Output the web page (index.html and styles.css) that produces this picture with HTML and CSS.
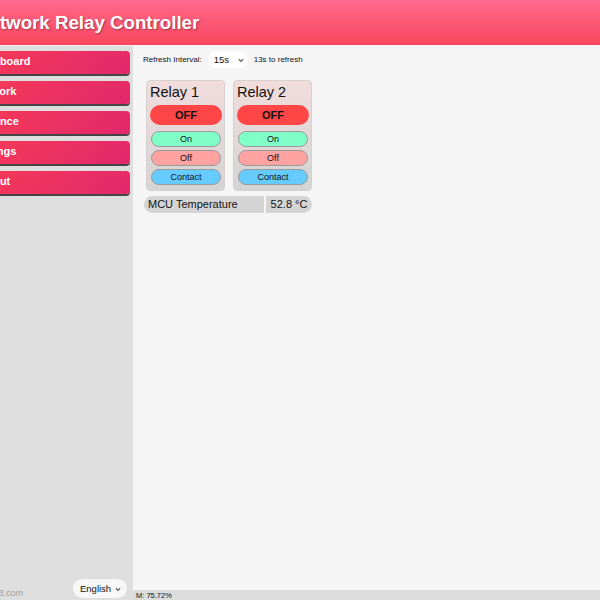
FILE: index.html
```html
<!DOCTYPE html>
<html lang="en">
<head>
    <meta charset="UTF-8">
    <meta name="viewport" content="width=device-width, initial-scale=1.0">
    <title>Network Relay Controller</title>
    <link rel="stylesheet" href="styles.css">
</head>
<body>
    <!-- Top bar -->
    <header class="topbar">
        <h1 class="title">Network Relay Controller</h1>
    </header>

    <div class="layout">
        <!-- Side menu -->
        <nav class="sidebar">
            <div class="menu">
                <a class="menu-btn">Dashboard</a>
                <a class="menu-btn">Network</a>
                <a class="menu-btn">Advance</a>
                <a class="menu-btn">Settings</a>
                <a class="menu-btn">Logout</a>
            </div>
            <div class="side-footer">
                <span class="site">nrc3.com</span>
                <div class="pill-select lang">English <svg width="6" height="5" viewBox="0 0 6 5"><path d="M0.8 1.2 L3 3.4 L5.2 1.2" fill="none" stroke="#555" stroke-width="1.1"/></svg></div>
            </div>
        </nav>

        <!-- Main content -->
        <main class="content">
            <div class="refresh-row">
                <span>Refresh Interval:</span>
                <div class="pill-select interval">15s <svg width="6" height="5" viewBox="0 0 6 5"><path d="M0.8 1.2 L3 3.4 L5.2 1.2" fill="none" stroke="#555" stroke-width="1.1"/></svg></div>
                <span>13s to refresh</span>
            </div>

            <div class="relays">
                <div class="relay-card">
                    <div class="relay-name">Relay 1</div>
                    <div class="state off">OFF</div>
                    <button class="act on">On</button>
                    <button class="act off">Off</button>
                    <button class="act contact">Contact</button>
                </div>
                <div class="relay-card">
                    <div class="relay-name">Relay 2</div>
                    <div class="state off">OFF</div>
                    <button class="act on">On</button>
                    <button class="act off">Off</button>
                    <button class="act contact">Contact</button>
                </div>
            </div>

            <div class="sensor">
                <div class="sensor-label">MCU Temperature</div>
                <div class="sensor-value">52.8 °C</div>
            </div>

            <div class="status">M: 75.72%</div>
        </main>
    </div>
</body>
</html>
```

FILE: styles.css
```css
/* Relay controller page */
body {
    margin: 0;
    height: 600px;
    overflow: hidden;
    display: flex;
    flex-direction: column;
    font-family: "Liberation Sans", Arial, sans-serif;
    background-color: #f5f5f5;
}

.topbar {
    height: 45px;
    flex-shrink: 0;
    background: linear-gradient(to bottom, #ff6a8e, #f9455d);
    border-bottom: 1px solid #f2f2f2;
    display: flex;
    align-items: center;
}

.title {
    margin: 0 0 0 -24px;
    font-size: 18.7px;
    font-weight: bold;
    color: white;
    text-shadow: 1px 1px 2px rgba(0, 0, 0, 0.35);
    white-space: nowrap;
}

.layout {
    flex: 1;
    display: flex;
    min-height: 0;
}

.sidebar {
    width: 133px;
    flex-shrink: 0;
    background-color: #dedede;
    display: flex;
    flex-direction: column;
    justify-content: space-between;
    overflow: hidden;
}

.menu {
    display: flex;
    flex-direction: column;
    gap: 7px;
    padding-top: 5px;
    margin-left: -40px;
    margin-right: 3px;
}

.menu-btn {
    height: 23px;
    line-height: 21px;
    padding-left: 13px;
    font-size: 11px;
    font-weight: bold;
    color: white;
    background: linear-gradient(135deg, #f83c55, #e2286c);
    border-radius: 4px;
    box-shadow: 0 2px 0 #454545;
}

.side-footer {
    display: flex;
    align-items: center;
    justify-content: space-between;
    padding: 0 6px 2px 0;
}

.site {
    margin-left: -14px;
    margin-top: 9px;
    font-size: 9px;
    font-style: italic;
    color: #a0a0a0;
}

.pill-select {
    display: flex;
    align-items: center;
    justify-content: space-between;
    background-color: #f7f7f7;
    border-radius: 10px;
    color: #111;
}

.pill-select svg {
    margin-top: 1px;
}

.lang {
    width: 54px;
    height: 19px;
    box-sizing: border-box;
    padding: 0 6px 0 7px;
    font-size: 9.5px;
}

.content {
    flex: 1;
    display: flex;
    flex-direction: column;
    min-width: 0;
}

.refresh-row {
    display: flex;
    align-items: center;
    gap: 6px;
    margin: 5px 0 0 10px;
    font-size: 8px;
    color: #111;
}

.interval {
    width: 40px;
    height: 17px;
    box-sizing: border-box;
    padding: 0 4px 0 6px;
    font-size: 9.5px;
    background-color: #ffffff;
}

.relays {
    display: flex;
    gap: 8px;
    margin: 12px 0 0 13px;
}

.relay-card {
    width: 79px;
    height: 111px;
    box-sizing: border-box;
    padding: 3px 3px 0 4px;
    background: linear-gradient(to bottom, #f2dcdc, #d4d4d4);
    border: 1px solid #d6d0d0;
    border-radius: 4px;
    display: flex;
    flex-direction: column;
}

.relay-name {
    font-size: 14.5px;
    color: #111;
    margin: 0 0 5px -1px;
}

.state {
    height: 20px;
    margin: 0 -1px 6px -1px;
    line-height: 20px;
    text-align: center;
    font-size: 11px;
    font-weight: bold;
    border-radius: 10px;
}

.state.off {
    background-color: #ff4646;
    color: #111;
}

.act {
    height: 16px;
    margin: 0 0 3px 0;
    padding: 0;
    font-family: "Liberation Sans", Arial, sans-serif;
    font-size: 9px;
    color: #111;
    border: 1px solid #9a9a9a;
    border-radius: 8px;
}

.act.on {
    background-color: #80ffc9;
}

.act.off {
    background-color: #ffa2a2;
}

.act.contact {
    background-color: #66cbff;
}

.sensor {
    display: flex;
    gap: 2px;
    margin: 5px 0 0 11px;
    font-size: 11px;
    color: #111;
}

.sensor-label {
    width: 120px;
    height: 17px;
    line-height: 17px;
    padding-left: 4px;
    box-sizing: border-box;
    background-color: #d4d4d4;
    border-radius: 9px 0 0 9px;
}

.sensor-value {
    width: 46px;
    height: 17px;
    line-height: 17px;
    text-align: center;
    background-color: #d4d4d4;
    border-radius: 0 9px 9px 0;
}

.status {
    margin-top: auto;
    height: 10px;
    line-height: 11px;
    padding-left: 3px;
    font-size: 7.5px;
    color: #111;
    background-color: #dcdcdc;
}
```
